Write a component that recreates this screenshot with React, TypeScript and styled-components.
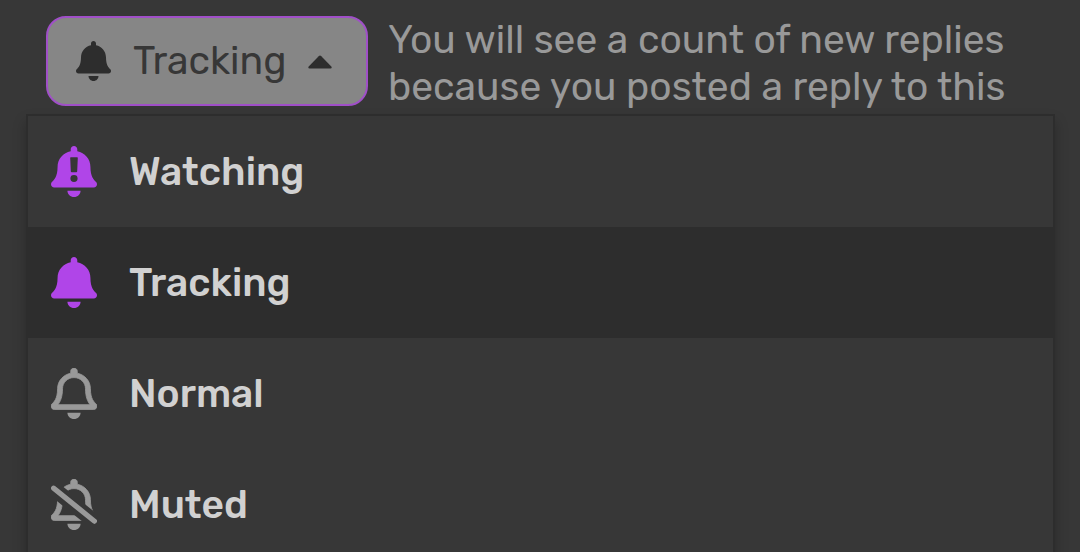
import React, { useId, useState } from "react";
import styled, { createGlobalStyle } from "styled-components";

const GlobalStyle = createGlobalStyle`
  * {
    box-sizing: border-box;
  }

  html, body {
    margin: 0;
    height: 100%;
    overflow: hidden;
  }

  body {
    background: #373737;
    color: #d1d1d1;
    font-family: Rubik, Roboto, "Liberation Sans", sans-serif;
    font-size: 39px;
  }
`;

const Page = styled.main`
  padding: 16px 25px 0 26px;
`;

const Controls = styled.div`
  display: flex;
  align-items: flex-start;
  gap: 20px;
  height: 90px;
  margin-bottom: 8px;
  padding: 0 20px;
`;

const Trigger = styled.button`
  display: flex;
  flex: 0 0 322px;
  align-items: center;
  height: 90px;
  padding: 0 34px 0 28px;
  border: 2px solid #a04fc8;
  border-radius: 20px;
  background: #868686;
  color: #373737;
  font: inherit;
  line-height: 48px;
  cursor: pointer;
`;

const TriggerLabel = styled.span`
  flex: 1;
  margin-left: 22px;
  text-align: left;
`;

const Reason = styled.p`
  flex: 1;
  margin: 0;
  padding-top: 1px;
  color: #999999;
  line-height: 47px;
`;

const Menu = styled.ul`
  margin: 0;
  padding: 0;
  border: 2px solid #2d2d2d;
  background: #373737;
  box-shadow: 0 8px 12px rgba(0, 0, 0, 0.25);
  list-style: none;
`;

const Option = styled.button<{ $selected: boolean }>`
  display: flex;
  align-items: center;
  gap: 32px;
  width: 100%;
  height: 111px;
  padding: 0 23px;
  border: 0;
  background: ${({ $selected }) => ($selected ? "#2d2d2d" : "transparent")};
  color: #d1d1d1;
  font: inherit;
  font-weight: 500;
  text-align: left;
  cursor: pointer;
`;

const Icon = styled.svg<{ $color: string; $small?: boolean }>`
  flex: none;
  width: ${({ $small }) => ($small ? 35 : 46)}px;
  height: ${({ $small }) => ($small ? 40 : 51)}px;
  color: ${({ $color }) => $color};
  fill: currentColor;
`;

const Caret = styled.svg`
  flex: none;
  width: 24px;
  height: 16px;
  fill: #2d2d2d;
`;

const CLAPPER = "M224 512c35.32 0 63.97-28.65 63.97-64H160.03c0 35.35 28.65 64 63.97 64z";
const BODY =
  "M439.39 362.29c-19.32-20.76-55.47-51.99-55.47-154.29 0-77.7-54.48-139.9-127.94-155.16V32c0-17.67-14.32-32-31.98-32s-31.98 14.33-31.98 32v20.84C118.56 68.1 64.08 130.3 64.08 208c0 102.3-36.15 133.53-55.47 154.29-6 6.45-8.66 14.16-8.61 21.71.11 16.4 12.98 32 32.1 32h383.8c19.12 0 32-15.6 32.1-32 .05-7.55-2.61-15.27-8.61-21.71z";
const HOLLOW =
  "M67.53 368c21.22-27.97 44.42-74.33 44.53-159.42 0-.2-.06-.38-.06-.58 0-61.86 50.14-112 112-112s112 50.14 112 112c0 .2-.06.38-.06.58.11 85.1 23.31 131.46 44.53 159.42H67.53z";
const MARK =
  "M193 112h62q6 0 6 7l-6 137q-1 8-8 8h-46q-7 0-8-8l-6-137q0-7 6-7zM224 291a35 35 0 1 0 0 70a35 35 0 1 0 0-70z";

type Level = "watching" | "tracking" | "normal" | "muted";

function BellIcon({ level, color, small }: { level: Level; color: string; small?: boolean }) {
  const maskId = useId();
  const outlined = level === "normal" || level === "muted";
  const body = level === "watching" ? BODY + MARK : outlined ? BODY + HOLLOW : BODY;
  return (
    <Icon $color={color} $small={small} viewBox="0 0 448 512" preserveAspectRatio="none" aria-hidden="true">
      {level === "muted" && (
        <mask id={maskId} maskUnits="userSpaceOnUse" x="0" y="0" width="448" height="512">
          <rect width="448" height="512" fill="white" />
          <path d="M-60 27L508 497" stroke="black" strokeWidth="150" />
        </mask>
      )}
      <path
        d={body}
        fillRule="evenodd"
        stroke={outlined ? "currentColor" : undefined}
        strokeWidth={outlined ? 8 : undefined}
        mask={level === "muted" ? `url(#${maskId})` : undefined}
      />
      <path d={CLAPPER} />
      {level === "muted" && (
        <path d="M26 92L422 423" stroke="currentColor" strokeWidth="52" strokeLinecap="round" />
      )}
    </Icon>
  );
}

const LEVELS: { id: Level; label: string; color: string }[] = [
  { id: "watching", label: "Watching", color: "#b045e8" },
  { id: "tracking", label: "Tracking", color: "#b045e8" },
  { id: "normal", label: "Normal", color: "#999999" },
  { id: "muted", label: "Muted", color: "#999999" },
];

export default function App() {
  const [selected, setSelected] = useState<Level>("tracking");
  const current = LEVELS.find((level) => level.id === selected)!;

  return (
    <>
      <GlobalStyle />
      <Page>
        <Controls>
          <Trigger type="button" aria-expanded="true" aria-controls="notification-levels">
            <BellIcon level={selected} color="#2d2d2d" small />
            <TriggerLabel>{current.label}</TriggerLabel>
            <Caret viewBox="0 0 24 16" aria-hidden="true">
              <path d="M1.5 15.5Q-.4 15 .7 13.4L10.7 3.2Q12 2 13.3 3.2L23.3 13.4Q24.4 15 22.5 15.5z" />
            </Caret>
          </Trigger>
          <Reason>You will see a count of new replies because you posted a reply to this</Reason>
        </Controls>
        <Menu id="notification-levels">
          {LEVELS.map((level) => (
            <li key={level.id}>
              <Option
                type="button"
                $selected={level.id === selected}
                aria-pressed={level.id === selected}
                onClick={() => setSelected(level.id)}
              >
                <BellIcon level={level.id} color={level.color} />
                {level.label}
              </Option>
            </li>
          ))}
        </Menu>
      </Page>
    </>
  );
}
